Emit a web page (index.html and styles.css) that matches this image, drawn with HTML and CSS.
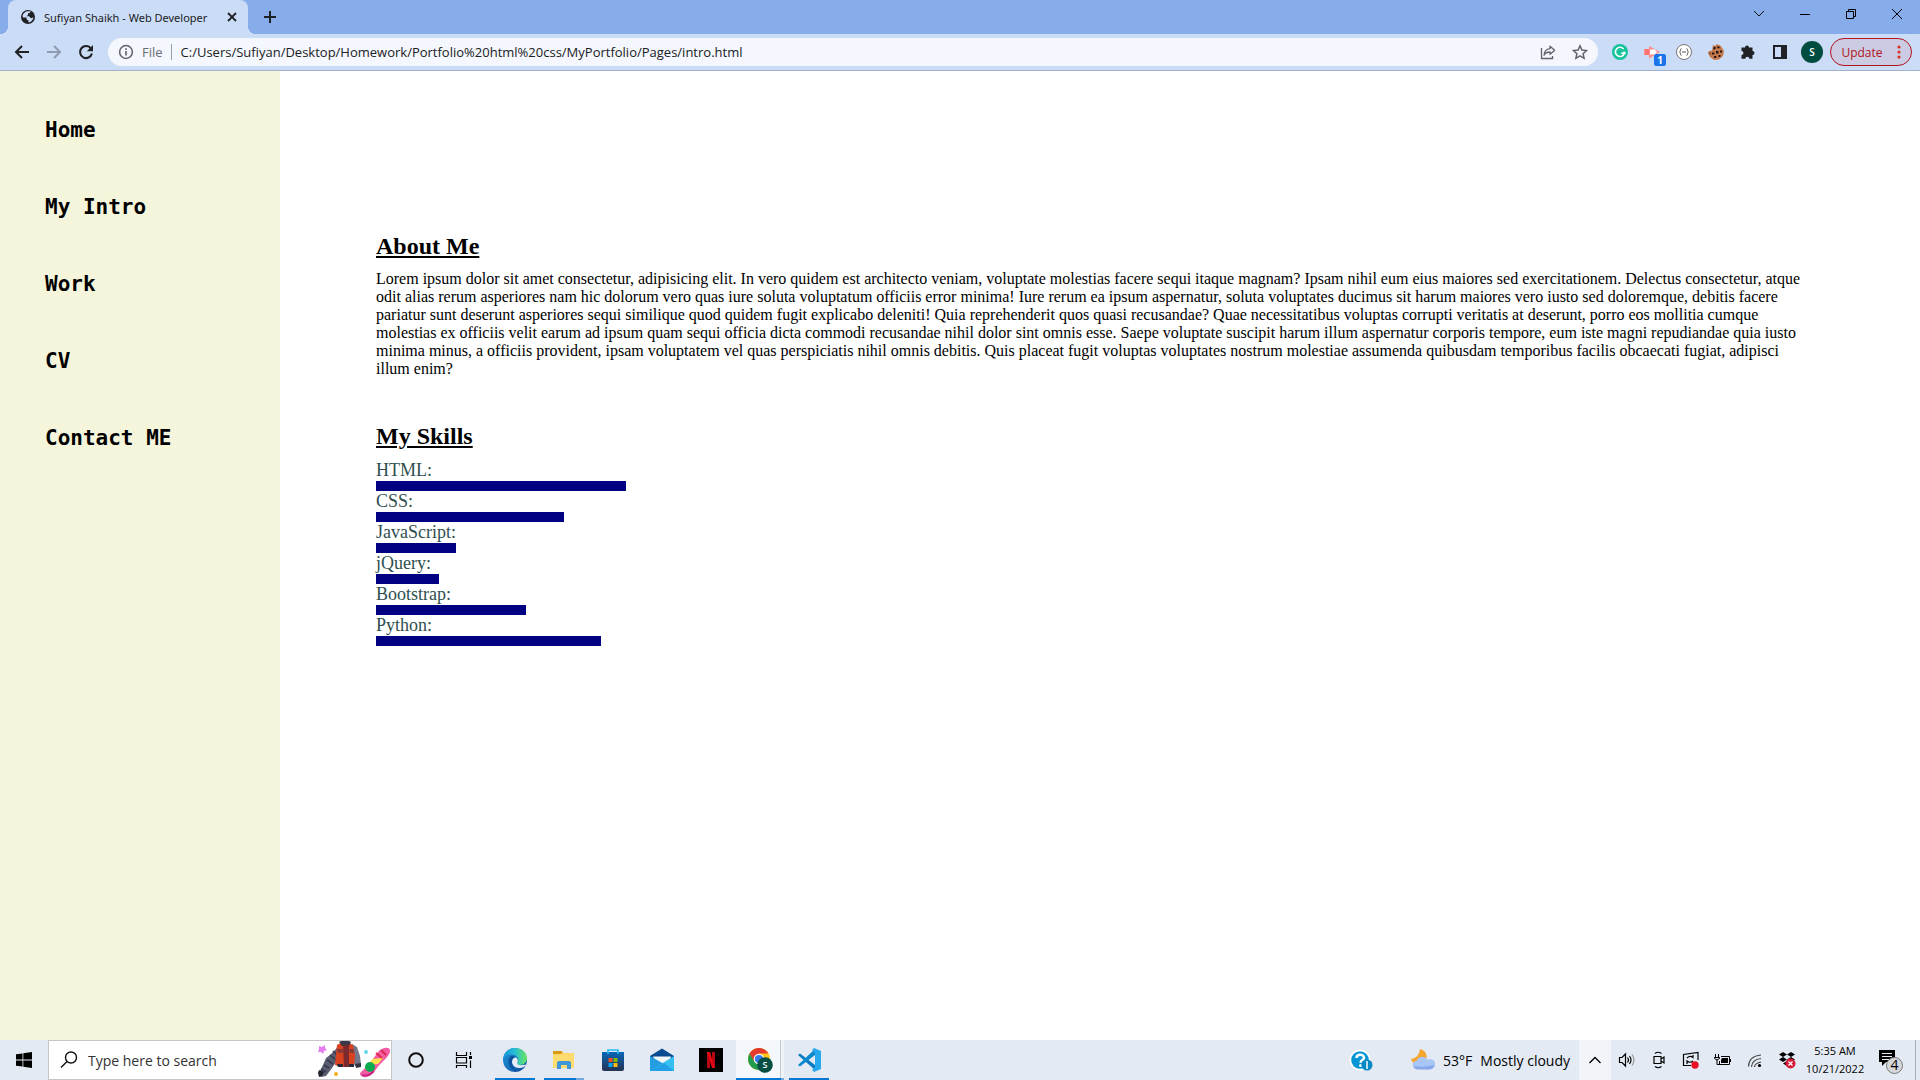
FILE: index.html
```html
<!DOCTYPE html>
<html lang="en">
<head>
<meta charset="utf-8">
<title>Sufiyan Shaikh - Web Developer</title>
<link rel="stylesheet" href="styles.css">
</head>
<body>
<header class="browser">
  <div class="tabstrip">
    <div class="tab">
      <svg class="favicon" width="16" height="16" viewBox="0 0 16 16"><circle cx="8" cy="8" r="7" fill="#202124"/><path d="M7.500 2.200h3.300L9.300 4.300H8v1.700L6.300 7.200h2.900l1.500 2 2.800-.7c-.5 2.700-2.300 4.600-5 4.900V11.500L6.500 10.300V8.600H3L2.500 7C3 4.600 4.700 2.700 7.500 2.200z" fill="#cbdcf6"/></svg>
      <span class="tab-title">Sufiyan Shaikh - Web Developer</span>
      <button class="tab-close" aria-label="Close tab"><svg width="16" height="16" viewBox="0 0 16 16" fill="none" stroke="#202124" stroke-width="1.8"><path d="M4 4l8 8M12 4l-8 8"/></svg></button>
    </div>
    <button class="new-tab" aria-label="New tab"><svg width="14" height="14" viewBox="0 0 14 14" stroke="#202124" stroke-width="2"><path d="M7 1v12M1 7h12"/></svg></button>
    <div class="window-controls">
      <button aria-label="Search tabs"><svg width="12" height="12" viewBox="0 0 12 12" fill="none" stroke="#111"><path d="M1 3l5 5 5-5"/></svg></button>
      <button aria-label="Minimize"><svg width="12" height="12" viewBox="0 0 12 12" stroke="#000"><path d="M1 6.500h10"/></svg></button>
      <button aria-label="Restore"><svg width="12" height="12" viewBox="0 0 12 12" fill="none" stroke="#000"><path d="M1.500 3.500h7v7h-7zM3.500 3.500v-2h7v7h-2"/></svg></button>
      <button aria-label="Close"><svg width="12" height="12" viewBox="0 0 12 12" stroke="#000"><path d="M1 1l10 10M11 1L1 11"/></svg></button>
    </div>
  </div>
  <div class="toolbar">
    <button class="tool" aria-label="Back"><svg width="16" height="16" viewBox="0 0 16 16" fill="none" stroke="#202124" stroke-width="2"><path d="M15 8H2.500M8 2L2 8l6 6"/></svg></button>
    <button class="tool" aria-label="Forward"><svg width="16" height="16" viewBox="0 0 16 16" fill="none" stroke="#8f9bb0" stroke-width="2"><path d="M1 8h12.500M8 2l6 6-6 6"/></svg></button>
    <button class="tool" aria-label="Reload"><svg width="16" height="16" viewBox="0 0 16 16"><path d="M13 4.600A6 6 0 1 0 13.900 9.500" fill="none" stroke="#202124" stroke-width="2.100"/><path d="M15 1v6.200H8.800z" fill="#202124"/></svg></button>
    <div class="omnibox">
      <svg width="16" height="16" viewBox="0 0 16 16"><circle cx="8" cy="8" r="6.400" fill="none" stroke="#5f6368" stroke-width="1.500"/><path d="M7.200 7h1.600v4.500H7.200zM7.200 4.300h1.600v1.600H7.200z" fill="#5f6368"/></svg>
      <label class="scheme" for="url">File</label>
      <input id="url" class="url" type="text" value="C:/Users/Sufiyan/Desktop/Homework/Portfolio%20html%20css/MyPortfolio/Pages/intro.html">
      <button class="tool" aria-label="Share"><svg width="16" height="16" viewBox="0 0 16 16" fill="none" stroke="#5f6368" stroke-width="1.300"><path d="M1.500 4v10.500h11V12"/><path d="M10 2.200l4.700 4-4.700 4V8C7 8 5.200 8.900 4 11.200 4.300 7.500 6.500 5 10 4.600z" stroke-linejoin="round"/></svg></button>
      <button class="tool" aria-label="Bookmark"><svg width="16" height="16" viewBox="0 0 16 16" fill="none" stroke="#5f6368" stroke-width="1.500"><path d="M8 1.800l1.900 4.300 4.700.5-3.500 3.100 1 4.600L8 11.900l-4.100 2.400 1-4.600L1.400 6.600l4.700-.5z"/></svg></button>
    </div>
    <div class="extensions">
      <button class="tool" aria-label="Grammarly"><svg width="16" height="16" viewBox="0 0 16 16"><circle cx="8" cy="8" r="8" fill="#15c39a"/><path d="M11.600 5A4.600 4.600 0 1 0 12.400 9.300H9.200" fill="none" stroke="#fff" stroke-width="1.600"/><path d="M10.600 7.800h2.800v3z" fill="#fff"/></svg></button>
      <button class="tool badged" aria-label="Screen recorder"><svg width="16" height="16" viewBox="0 0 16 16"><path d="M0 5h5V2l11 6-11 6.500V11H0z" fill="#ff8c8c"/><path d="M6 5.500h5l2 2.500-2 2.500H6z" fill="#fff"/><path d="M1 5h4v6H1z" fill="#ff7474"/></svg><span class="badge">1</span></button>
      <button class="tool" aria-label="JSON viewer"><svg width="16" height="16" viewBox="0 0 16 16" fill="none" stroke="#555"><circle cx="8" cy="8" r="7.500" fill="#fff" stroke="#777"/><path d="M5.500 4.700c-1.300 0-1 1.300-1 2.200L3.500 8l1 1.100c0 .9-.3 2.200 1 2.200M10.500 4.700c1.300 0 1 1.300 1 2.200l1 1.100-1 1.100c0 .9.300 2.200-1 2.200M6 8h4"/></svg></button>
      <button class="tool" aria-label="Cookies"><svg width="16" height="16" viewBox="0 0 16 16"><path d="M5 1l2 1 2-2 4 2 3 5-1 5-4 3.500-5 .5-4-3-2-4L1 7l3-.5z" fill="#c47a4c"/><path d="M6 2.500l2 1-1 2-2-.5zM10 2l2 1-1 1.500-2-.5zM8 7h2.500v2.500H8zM4 8.500h2.300v2H4zM12 6.500h2v2h-2zM6 12h2.300v2H6zM10.500 11h2v2h-2zM1 8.500l1.500.5v2z" fill="#2d1712"/></svg></button>
      <button class="tool" aria-label="Extensions"><svg width="16" height="16" viewBox="0 0 16 16"><path d="M5 3.500a2 2 0 0 1 4 0h3.500V7a2 2 0 0 1 0 4v3.800H9.300a2 2 0 0 0-4 0H1.500v-3.700a2 2 0 0 0 0-4V3.500z" fill="#202124"/></svg></button>
      <button class="tool" aria-label="Side panel"><svg width="16" height="16" viewBox="0 0 16 16"><path d="M1 1h14v14H1zM3 3v10h6V3z" fill="#202124" fill-rule="evenodd"/></svg></button>
      <button class="tool" aria-label="Profile"><span class="avatar">S</span></button>
    </div>
    <button class="update">Update <svg width="4" height="14" viewBox="0 0 4 14" fill="#d93025"><circle cx="2" cy="2" r="1.600"/><circle cx="2" cy="7" r="1.600"/><circle cx="2" cy="12" r="1.600"/></svg></button>
  </div>
</header>

<div class="page">
  <nav class="sidebar">
    <a href="#home">Home</a>
    <a href="#about">My Intro</a>
    <a href="#work">Work</a>
    <a href="#cv">CV</a>
    <a href="#contact">Contact ME</a>
  </nav>
  <main class="content">
    <section id="about">
      <h2>About Me</h2>
      <p>Lorem ipsum dolor sit amet consectetur, adipisicing elit. In vero quidem est architecto veniam, voluptate molestias facere sequi itaque magnam? Ipsam nihil eum eius maiores sed exercitationem. Delectus consectetur, atque odit alias rerum asperiores nam hic dolorum vero quas iure soluta voluptatum officiis error minima! Iure rerum ea ipsum aspernatur, soluta voluptates ducimus sit harum maiores vero iusto sed doloremque, debitis facere pariatur sunt deserunt asperiores sequi similique quod quidem fugit explicabo deleniti! Quia reprehenderit quos quasi recusandae? Quae necessitatibus voluptas corrupti veritatis at deserunt, porro eos mollitia cumque molestias ex officiis velit earum ad ipsum quam sequi officia dicta commodi recusandae nihil dolor sint omnis esse. Saepe voluptate suscipit harum illum aspernatur corporis tempore, eum iste magni repudiandae quia iusto minima minus, a officiis provident, ipsam voluptatem vel quas perspiciatis nihil omnis debitis. Quis placeat fugit voluptas voluptates nostrum molestiae assumenda quibusdam temporibus facilis obcaecati fugiat, adipisci illum enim?</p>
    </section>
    <section class="skills">
      <h2>My Skills</h2>
      <ul>
        <li>HTML:<div class="bar" style="width:250px"></div></li>
        <li>CSS:<div class="bar" style="width:188px"></div></li>
        <li>JavaScript:<div class="bar" style="width:80px"></div></li>
        <li>jQuery:<div class="bar" style="width:63px"></div></li>
        <li>Bootstrap:<div class="bar" style="width:150px"></div></li>
        <li>Python:<div class="bar" style="width:225px"></div></li>
      </ul>
    </section>
  </main>
</div>

<footer class="taskbar">
  <button class="start" aria-label="Start"><svg width="16" height="16" viewBox="0 0 16 16"><path d="M0 2.300l6.500-.9v6.100H0zM7.300 1.300L16 0v7.500H7.300zM0 8.400h6.500v6.200L0 13.700zM7.300 8.400H16V16l-8.700-1.300z"/></svg></button>
  <div class="search">
    <svg width="18" height="18" viewBox="0 0 18 18" fill="none" stroke="#111" stroke-width="1.400"><circle cx="11" cy="6.500" r="5.500"/><path d="M7 10.500L1 16.500"/></svg>
    <input type="text" placeholder="Type here to search" aria-label="Type here to search">
    <svg width="74" height="38" viewBox="0 0 74 38">
      <path d="M2 5l3 1 3-2 0 3 2 2-3 1-1 3-2-2-3 0 1-3z" fill="#e57df2"/>
      <path d="M18 9l5-6 2 3-2 12-4 3-4 6-6 8-5 1-2-4 4-8 3-7 4-3z" fill="#5a5d72"/>
      <path d="M16 10l5 5M13 14l6 5M10 19l6 4M7 24l5 3M4 28l5 3" stroke="#37394d" stroke-width="1.600"/>
      <path d="M2 29l5 2-2 4-3 1-1-4z" fill="#22232e"/>
      <path d="M35 3l5 3 3 9 1 9-6 1-4-11z" fill="#74768a"/><path d="M38 23l6-1 0 4-5 1z" fill="#303241"/>
      <path d="M20 4c4-3 12-3 16 0l2 10-1 11-6 1h-6l-7-2 1-10z" fill="#d9411f"/>
      <path d="M22 1c3-2 9-2 12 0l-2 4h-7z" fill="#3a3648"/>
      <path d="M26 4h6v22h-5z" fill="#7c2930"/><path d="M20 8h6v4h-5zM32 8h5v4h-4z" fill="#8b3937"/>
      <path d="M20 23h6v3h-5zM32 23h5v3h-5z" fill="#28283a"/>
      <path d="M44 31c7-6 12-13 17-20 3-4 11-6 12-2 1 6-9 12-13 18-5 7-9 10-13 9-4-1-5-3-3-5z" fill="#f35ca4"/>
      <path d="M55 18l11-1-5 6-9 1z" fill="#ffe34d"/><path d="M59 12l6 5M64 9l5 5" stroke="#df294d" stroke-width="2"/>
      <circle cx="53" cy="26" r="5" fill="#05ab50"/><path d="M45 34c5 2 9-1 12-4" stroke="#c72783" stroke-width="2" fill="none"/>
      <circle cx="49" cy="11" r="2" fill="#65d5e9"/><circle cx="19" cy="33" r="2" fill="#f8af18"/>
    </svg>
  </div>
  <button class="task" aria-label="Cortana"><svg width="16" height="16" viewBox="0 0 16 16"><circle cx="8" cy="8" r="6.800" fill="none" stroke="#111" stroke-width="2"/></svg></button>
  <button class="task" aria-label="Task view"><svg width="18" height="16" viewBox="0 0 18 16" fill="none" stroke="#000" stroke-width="1.200"><path d="M1.500 0v3.500h10V0M1.500 5.500h10v5.500h-10zM1.500 16v-2.500h10V16M15.500 0v3M15.500 8.500V16"/><path d="M14 4h3v3h-3z" fill="#000" stroke="none"/></svg></button>
  <div class="apps">
    <button class="app open" aria-label="Edge"><svg width="24" height="24" viewBox="0 0 24 24"><defs><linearGradient id="edge-top" x1="0" y1="0" x2="1" y2="0"><stop offset="0" stop-color="#1594dc"/><stop offset=".5" stop-color="#27bdd4"/><stop offset="1" stop-color="#67e85a"/></linearGradient><linearGradient id="edge-low" x1="0" y1="0" x2="1" y2="1"><stop offset="0" stop-color="#1b9de2"/><stop offset="1" stop-color="#11489b"/></linearGradient></defs><circle cx="12" cy="12" r="12" fill="url(#edge-low)"/><path d="M0 11C1 4 6 0 12 0c7 0 12 5 12 10 0 4-3 7-6.500 7-3 0-4-1.500-3-2.800C17 10 13 6.500 8.500 6.500 4 6.500 1 8.500 0 11z" fill="url(#edge-top)"/><path d="M12.300 9.600c-2 0-3.300 1.700-3.300 4C9 18 13 20.500 17 20c2.500-.3 4-1 5.600-2.300C24 16.400 22 16.500 20 17c-3.500.8-6.500-.6-5.500-2.800 1-2-.2-4.600-2.200-4.600z" fill="#e6ecf5"/><path d="M8 8C5 10 4.500 15 7.500 19c2.500 3.500 6.500 4.500 9.500 4-5-.5-9-5-8-10 .3-2 1.500-3.200 3-3.400C11.300 8 9.500 7.300 8 8z" fill="#0d529d"/></svg></button>
    <button class="app open stacked" aria-label="File Explorer"><svg width="24" height="24" viewBox="0 0 24 24"><path d="M1 3h8l2 2h11v15H1z" fill="#ffd767"/><path d="M1 3h8l2 1-2 2H1z" fill="#d99a12"/><path d="M1 7h21v13H1z" fill="#ffdc6f"/><path d="M5 21v-6q0-2 2-2h10q2 0 2 2v6h-4v-4H9v4z" fill="#3f96d8"/></svg></button>
    <button class="app" aria-label="Microsoft Store"><svg width="24" height="24" viewBox="0 0 24 24"><defs><linearGradient id="store" x2="0" y2="1"><stop offset="0" stop-color="#0867b8"/><stop offset="1" stop-color="#253254"/></linearGradient></defs><path d="M1 4h22v17q0 2-2 2H3q-2 0-2-2z" fill="url(#store)"/><path d="M7 6V2h10v4" fill="none" stroke="#2bb9f1" stroke-width="1.700"/><path d="M7.500 10h4v4h-4z" fill="#f25022"/><path d="M12.500 10h4v4h-4z" fill="#7fba00"/><path d="M7.500 15h4v4h-4z" fill="#00a4ef"/><path d="M12.500 15h4v4h-4z" fill="#ffb900"/></svg></button>
    <button class="app" aria-label="Mail"><svg width="24" height="24" viewBox="0 0 24 24"><path d="M0 8l12-7.500L24 8v4H0z" fill="#084b91"/><path d="M3 8.500h18l-2 7H6z" fill="#f2f6fb"/><path d="M0 8l14 8-12 7H0z" fill="#239de0"/><path d="M24 8v15H0z" fill="#36c0f2"/><path d="M0 23l14-8 10 8z" fill="#229fe7"/></svg></button>
    <button class="app" aria-label="Netflix"><svg width="24" height="24" viewBox="0 0 24 24"><path d="M0 0h24v24H0z"/><path d="M8 4h3v16H8zM13 4h3v16h-3z" fill="#b40710"/><path d="M8 4h3l5 16h-3z" fill="#e50914"/></svg></button>
    <button class="app open current" aria-label="Chrome"><svg width="26" height="26" viewBox="1 0 26 26"><circle cx="13" cy="12" r="11" fill="#ffc61a"/><path d="M3.500 6.500A11 11 0 0 1 22.500 6.500H13L8.200 15z" fill="#e33b2e"/><path d="M3.500 6.500l5 8.500L13 17v6A11 11 0 0 1 3.500 6.500z" fill="#229b4d"/><circle cx="13" cy="12" r="5.300" fill="#fff"/><circle cx="13" cy="12" r="4.100" fill="#347be8"/><circle cx="19" cy="18" r="7.800" fill="#064f42"/><text x="19" y="21" text-anchor="middle" class="icon-letter">S</text></svg></button>
    <button class="app open" aria-label="Visual Studio Code"><svg width="24" height="24" viewBox="0 0 24 24"><path d="M1 7l2-1.500L18 17v5z" fill="#087bc1"/><path d="M1 17l2 1.500L18 7V1z" fill="#0b88cf"/><path d="M17 0l7 3v18l-7 3-2-2 3-3V5l-3-3z" fill="#29a9ed"/></svg></button>
  </div>
  <div class="tray">
    <button class="help" aria-label="Help"><svg width="24" height="24" viewBox="0 0 24 24"><circle cx="11" cy="12" r="10.500" fill="#fff"/><circle cx="11" cy="12" r="8.800" fill="#0796d5"/><path d="M7.500 10c0-4.500 7.500-4.300 7.500-.3 0 2.500-3.500 2.300-3.500 5" fill="none" stroke="#fff" stroke-width="2.500"/><circle cx="11.500" cy="17.500" r="1.500" fill="#fff"/><circle cx="18" cy="17" r="5.500" fill="#0588c3"/><path d="M18 13v8" stroke="#fff" stroke-width="1.500"/></svg></button>
    <button class="weather"><svg width="24" height="24" viewBox="0 0 24 24"><path d="M9 1A8 8 0 1 1 0 11Q8 10 9 1z" fill="#f7a52d"/><path d="M6 21a4 4 0 0 1-.5-8 6 6 0 0 1 11-1 5 5 0 1 1 1.500 9z" fill="#a9c6f7"/><path d="M3 18c5 1 13 1 20-1a5 5 0 0 1-5 4.500H6l-2-1z" fill="#86a8ea"/></svg><span>53°F</span><span>Mostly cloudy</span></button>
    <button class="tray-icon chevron" aria-label="Show hidden icons"><svg width="14" height="14" viewBox="0 0 14 14" fill="none" stroke="#000" stroke-width="1.300"><path d="M1.500 10L7 4.500 12.500 10"/></svg></button>
    <button class="tray-icon" aria-label="Volume"><svg width="18" height="16" viewBox="0 0 18 16" fill="none" stroke="#000" stroke-width="1.200"><path d="M1.500 5.500H4l3.500-3.500v12L4 10.500H1.500zM9.500 5.500q2 2.500 0 5M11.500 4q3 4 0 8"/><path d="M14 2.500q4 5.500 0 11" stroke="#999"/></svg></button>
    <button class="tray-icon" aria-label="Meet now"><svg width="14" height="18" viewBox="0 0 14 18" fill="none" stroke="#000" stroke-width="1.200"><path d="M3 2.500Q6 0 9.500 2.500M3 15.500q3 2.500 6.500 0M2 5.500h7v7H2zM9 8l3-2v6l-3-2"/></svg></button>
    <button class="tray-icon" aria-label="Sync status"><svg width="18" height="18" viewBox="0 0 18 18" fill="none" stroke="#000" stroke-width="1.200"><path d="M9 14.500H1.500v-11L16 1.500V9M5 7q3-3 6-.500V4M11 10q-3 2.500-6 0v3"/><circle cx="13" cy="14" r="3.700" fill="#e81123" stroke="none"/></svg></button>
    <button class="tray-icon" aria-label="Battery"><svg width="18" height="16" viewBox="0 0 18 16" fill="none" stroke="#000"><path d="M1.500 2v3M4.500 2v3M.5 5.500h5v1q-2.500 3-5 0zM3 8v4.500h3M7 4.500h8.500v8H5.500V9M16.500 7v3"/><path d="M8 6h6v5H7V8z" fill="#000" stroke="none"/></svg></button>
    <button class="tray-icon" aria-label="Network"><svg width="16" height="16" viewBox="0 0 16 16" fill="none" stroke="#444" stroke-width="1.200"><path d="M1.500 14.500Q2 4 14 3M4.500 15Q5 7.500 14 6.500M7.500 15Q8 11 14 10"/><circle cx="12.500" cy="13.500" r="1.600" fill="#000" stroke="none"/></svg></button>
    <button class="tray-icon" aria-label="Dropbox"><svg width="18" height="18" viewBox="0 0 18 18"><path d="M5 1l4 2.500L5 6 1 3.500zM13 1l4 2.500L13 6 9 3.500zM5 6l4 2.500L5 11 1 8.500zM13 6l4 2.500-4 2.500-4-2.500zM9 10l4 2.500L9 15l-4-2.500z"/><circle cx="12.500" cy="12.500" r="5" fill="#d71c37"/><path d="M10.500 10.500l4 4m0-4l-4 4" stroke="#fff" stroke-width="1.300"/></svg></button>
    <div class="clock"><span>5:35 AM</span><span>10/21/2022</span></div>
    <button class="notifications" aria-label="Notifications"><svg width="28" height="28" viewBox="0 0 28 28"><path d="M2 4h16v12h-9l-4 4v-4H2z"/><path d="M5 7.500h10M5 10.500h10M5 13.500h7" stroke="#e6ecf5"/><circle cx="17.500" cy="19.500" r="8" fill="#d5d7da" stroke="#777"/><text x="17.500" y="24" text-anchor="middle" class="count">4</text></svg></button>
    <div class="show-desktop"></div>
  </div>
</footer>
</body>
</html>
```
FILE: styles.css
```css
* { box-sizing: border-box; }

body {
  margin: 0;
  min-height: 100vh;
  display: flex;
  flex-direction: column;
  background: #fff;
  color: #000;
  font-family: "Liberation Serif", serif;
  font-size: 16px;
}

button, input {
  padding: 0;
  border: 0;
  background: none;
  color: inherit;
  font: inherit;
}

button {
  display: flex;
  align-items: center;
  justify-content: center;
  flex-shrink: 0;
}

svg { display: block; flex-shrink: 0; }

/* Browser chrome */
.browser {
  font-family: "Open Sans", sans-serif;
  font-size: 13px;
  color: #202124;
  background: #cbdcf6;
  border-bottom: 1px solid #a3b1ca;
}

.tabstrip {
  height: 34px;
  display: flex;
  padding-left: 8px;
  background: #86ade9;
}

.tab {
  position: relative;
  width: 240px;
  height: 34px;
  padding: 0 8px 0 12px;
  display: flex;
  align-items: center;
  gap: 8px;
  background: #cbdcf6;
  border-radius: 8px 8px 0 0;
}

.tab::before, .tab::after {
  content: "";
  position: absolute;
  bottom: 0;
  width: 8px;
  height: 8px;
}

.tab::before { left: -8px; background: radial-gradient(circle at 0 0, #86ade9 8px, #cbdcf6 8px); }
.tab::after { right: -8px; background: radial-gradient(circle at 100% 0, #86ade9 8px, #cbdcf6 8px); }

.tab-title {
  flex: 1;
  font-family: "Noto Sans", sans-serif;
  font-size: 11px;
  white-space: nowrap;
}

.new-tab { width: 28px; margin-left: 8px; }

.window-controls {
  display: flex;
  margin-left: auto;
  height: 28px;
}

.window-controls button { width: 46px; }

.toolbar {
  height: 36px;
  display: flex;
  align-items: center;
  padding: 0 8px 0 6px;
}

.tool { width: 32px; height: 28px; }

.omnibox {
  flex: 1;
  height: 28px;
  margin-left: 6px;
  padding: 0 2px 0 10px;
  display: flex;
  align-items: center;
  background: #f4f7fd;
  border-radius: 14px;
}

.scheme {
  margin: 0 9px 0 8px;
  padding-right: 8px;
  line-height: 16px;
  color: #6a6e74;
  border-right: 1px solid #9aa0a6;
}

.url { flex: 1; min-width: 0; }

.extensions { display: flex; margin: 0 2px 0 6px; }

.badged { position: relative; }

.badge {
  position: absolute;
  right: 2px;
  bottom: 0;
  width: 12px;
  height: 12px;
  border-radius: 2px;
  background: #1a73e8;
  color: #fff;
  font-size: 10px;
  font-weight: 700;
  line-height: 12px;
}

.avatar {
  width: 22px;
  height: 22px;
  border-radius: 11px;
  background: #004d40;
  color: #fff;
  font-size: 10px;
  font-weight: 600;
  line-height: 22px;
}

.update {
  width: 82px;
  height: 28px;
  gap: 14px;
  border: 1px solid #b3131b;
  border-radius: 14px;
  background: #cbcce4;
  color: #b3131b;
  font-size: 12px;
}

/* Portfolio page */
.page { flex: 1; display: flex; }

.sidebar {
  width: 280px;
  flex-shrink: 0;
  padding: 47px 45px;
  display: flex;
  flex-direction: column;
  gap: 53px;
  background: #f5f5dc;
}

.sidebar a {
  color: #000;
  font: 700 21px/24px "DejaVu Sans Mono", monospace;
  text-decoration: none;
}

.content { flex: 1; padding: 161px 112px 40px 96px; }

h2 {
  margin: 0 0 10px;
  font-size: 24px;
  line-height: 28px;
  text-decoration: underline;
}

p { margin: 0; line-height: 18px; }

.skills { margin-top: 44px; }

ul { margin: 0; padding: 0; list-style: none; }

li { font-size: 18px; line-height: 21px; color: #2f4f4f; }

.bar { height: 10px; background: #000080; }

/* Windows taskbar */
.taskbar {
  height: 40px;
  display: flex;
  background: #e4eaf3;
  font-family: "Open Sans", sans-serif;
  font-size: 14px;
}

.start, .task { width: 48px; }

.search {
  width: 344px;
  padding: 0 0 0 11px;
  display: flex;
  align-items: center;
  gap: 10px;
  background: #fff;
  border: 1px solid #c6c6c6;
}

.search input { flex: 1; min-width: 0; }
.search input::placeholder { color: #333; opacity: 1; }

.apps { display: flex; gap: 1px; margin-left: 3px; }

.app { position: relative; width: 48px; }

.open::after {
  content: "";
  position: absolute;
  left: 4px;
  right: 4px;
  bottom: 0;
  height: 2px;
  background: #0078d4;
}

.stacked::after { background: linear-gradient(90deg, #0078d4 80%, #71a9de 80%); }

.current { background: linear-gradient(90deg, #f4f7fb 44px, #c3cad3 44px, #c3cad3 45px, #f0f4f9 45px); }
.current::after { left: 0; right: 0; background: linear-gradient(90deg, #0078d4 94%, #71a9de 94%); }

.icon-letter { fill: #fff; font: 600 9px "Open Sans", sans-serif; }

.tray { display: flex; margin-left: auto; }
.help { width: 32px; margin-right: 34px; }
.weather { gap: 8px; margin-right: 9px; }
.tray-icon { width: 32px; }
.chevron { background: #f1f4f9; }

.clock {
  width: 64px;
  display: flex;
  flex-direction: column;
  justify-content: center;
  align-items: center;
  font-size: 11px;
  line-height: 18px;
}

.notifications { width: 48px; }
.count { font: 14px "Open Sans", sans-serif; }
.show-desktop { width: 5px; border-left: 1px solid #a9afb9; }
```
